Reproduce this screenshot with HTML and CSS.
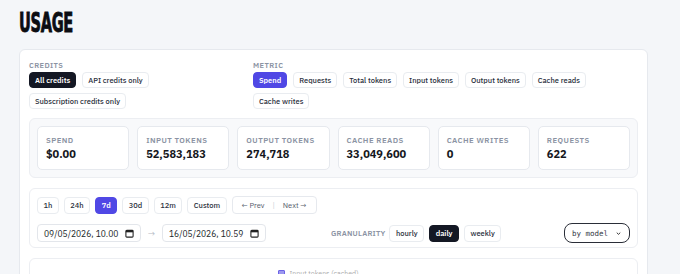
FILE: index.html
```html
<!DOCTYPE html>
<html>
<head>
<meta charset="utf-8">
<link rel="stylesheet" href="styles.css">
</head>
<body>
<div class="page">
  <h1 class="title"><span>USAGE</span></h1>
  <div class="card main">
    <div class="filters">
      <div class="group credits">
        <div class="label">CREDITS</div>
        <div class="chips">
          <span class="chip dark">All credits</span>
          <span class="chip">API credits only</span>
          <span class="chip">Subscription credits only</span>
        </div>
      </div>
      <div class="group metric">
        <div class="label">METRIC</div>
        <div class="chips">
          <span class="chip purple">Spend</span>
          <span class="chip">Requests</span>
          <span class="chip">Total tokens</span>
          <span class="chip">Input tokens</span>
          <span class="chip">Output tokens</span>
          <span class="chip">Cache reads</span>
          <span class="chip">Cache writes</span>
        </div>
      </div>
    </div>
    <div class="stats">
      <div class="stat"><div class="slabel">SPEND</div><div class="sval">$0.00</div></div>
      <div class="stat"><div class="slabel">INPUT TOKENS</div><div class="sval">52,583,183</div></div>
      <div class="stat"><div class="slabel">OUTPUT TOKENS</div><div class="sval">274,718</div></div>
      <div class="stat"><div class="slabel">CACHE READS</div><div class="sval">33,049,600</div></div>
      <div class="stat"><div class="slabel">CACHE WRITES</div><div class="sval">0</div></div>
      <div class="stat"><div class="slabel">REQUESTS</div><div class="sval">622</div></div>
    </div>
    <div class="time">
      <div class="row">
        <span class="chip">1h</span>
        <span class="chip">24h</span>
        <span class="chip purple">7d</span>
        <span class="chip">30d</span>
        <span class="chip">12m</span>
        <span class="chip">Custom</span>
        <span class="nav"><span class="navbtn">&larr; Prev</span><span class="sep">|</span><span class="navbtn">Next &rarr;</span></span>
      </div>
      <div class="row row2">
        <span class="date">09/05/2026, 10.00 <svg class="cal" viewBox="0 0 10 10" width="9" height="9"><rect x="1" y="1.5" width="8" height="7.5" rx="1" fill="none" stroke="#222" stroke-width="1.2"/><rect x="1" y="1.5" width="8" height="2.2" fill="#222"/></svg></span>
        <span class="arrow">&rarr;</span>
        <span class="date">16/05/2026, 10.59 <svg class="cal" viewBox="0 0 10 10" width="9" height="9"><rect x="1" y="1.5" width="8" height="7.5" rx="1" fill="none" stroke="#222" stroke-width="1.2"/><rect x="1" y="1.5" width="8" height="2.2" fill="#222"/></svg></span>
        <span class="gran">GRANULARITY</span>
        <span class="chip">hourly</span>
        <span class="chip dark">daily</span>
        <span class="chip">weekly</span>
        <span class="select">by model <svg viewBox="0 0 10 10" width="7" height="7"><path d="M2.5 3.8 L5 6.2 L7.5 3.8" fill="none" stroke="#333" stroke-width="1.4"/></svg></span>
      </div>
    </div>
    <div class="chart">
      <div class="legend"><span class="box"></span><span class="ltext">Input tokens (cached)</span></div>
    </div>
  </div>
</div>
</body>
</html>
```
FILE: styles.css
```css
* { box-sizing: border-box; }
html, body { margin: 0; padding: 0; }
body {
  background: #f4f6f9;
  font-family: "IBM Plex Sans", Inter, "Noto Sans", sans-serif;
  color: #1b1f2a;
  width: 680px;
  height: 274px;
  overflow: hidden;
}
.page { padding: 9px 32px 0 19px; }
.title {
  margin: 0;
  height: 40px;
  font-family: "DejaVu Sans Condensed", "DejaVu Sans", sans-serif;
  font-weight: 700;
  font-size: 27px;
  line-height: 28px;
  color: #0b0d12;
}
.title span {
  display: inline-block;
  transform: scaleX(0.6);
  transform-origin: left center;
  letter-spacing: -0.5px;
  -webkit-text-stroke: 0.9px #0b0d12;
}
.card {
  background: #fff;
  border: 1px solid #e6e9ee;
  border-radius: 6px;
}
.main { padding: 9px 9px 0 9px; height: 240px; }
.filters { display: flex; }
.group .label, .gran {
  font-size: 7.5px;
  font-weight: 600;
  letter-spacing: 0.4px;
  color: #8b93a3;
}
.group .label { margin: 1px 0 2px; line-height: 10px; }
.credits { width: 224px; }
.metric { flex: 1; }
.chips { display: flex; flex-wrap: wrap; gap: 5px 6px; }
.credits .chips { width: 130px; }
.chip {
  display: inline-flex;
  align-items: center;
  height: 16px;
  padding: 0 5px;
  font-size: 7.5px;
  font-weight: 500;
  color: #2c3140;
  border: 1px solid #e9ecf0;
  border-radius: 4px;
  background: #fff;
  white-space: nowrap;
}
.chip.dark { background: #141824; border-color: #141824; color: #fff; font-weight: 600; }
.chip.purple { background: #5048e5; border-color: #5048e5; color: #fff; font-weight: 600; }
.stats {
  margin-top: 9px;
  display: flex;
  gap: 8px;
  padding: 7px 7px 7px 7px;
  background: #f8f9fb;
  border: 1px solid #eceef2;
  border-radius: 6px;
}
.stat {
  flex: 1;
  height: 44px;
  background: #fff;
  border: 1px solid #e6e9ee;
  border-radius: 5px;
  padding: 8px 8px 0 8px;
}
.slabel {
  font-size: 7.8px;
  font-weight: 600;
  letter-spacing: 0.45px;
  color: #8b93a3;
  line-height: 10px;
}
.sval {
  margin-top: 2px;
  font-size: 11px;
  font-weight: 700;
  color: #15171d;
  line-height: 15px;
}
.time {
  margin-top: 10px;
  padding: 7px 7px 6px 7px;
  background: #fff;
  border: 1px solid #eceef2;
  border-radius: 6px;
  height: 60px;
}
.row { display: flex; align-items: center; gap: 5px; }
.row .chip { padding: 0 5.5px; height: 17px; }
.row2 { margin-top: 9px; gap: 0; }
.nav {
  display: inline-flex;
  align-items: center;
  height: 18px;
  padding: 0 9px;
  border: 1px solid #e6e9ee;
  border-radius: 4px;
  font-size: 7.5px;
  color: #555c6b;
  gap: 8px;
}
.sep { color: #c8ccd4; }
.date {
  display: inline-flex;
  align-items: center;
  justify-content: space-between;
  width: 104px;
  height: 18px;
  padding: 0 6px;
  border: 1px solid #e3e6eb;
  border-radius: 4px;
  font-size: 8.5px;
  color: #1b1f2a;
}
.cal { display: block; }
.arrow { width: 21px; text-align: center; color: #b5bac4; font-size: 9px; }
.gran { margin-left: 65px; margin-right: 4px; letter-spacing: 0.2px; }
.row2 .chip { margin-right: 5px; padding: 0 5.5px; height: 17px; }
.select {
  margin-left: auto;
  display: inline-flex;
  align-items: center;
  gap: 7px;
  height: 20px;
  padding: 0 7px 0 7px;
  border: 1px solid #2a2e38;
  border-radius: 8px;
  font-family: "DejaVu Sans Mono", "Liberation Mono", monospace;
  font-size: 7.5px;
  color: #333845;
}
.chart {
  margin-top: 10px;
  height: 40px;
  border: 1px solid #eceef2;
  border-radius: 6px;
  display: flex;
  justify-content: center;
  padding-top: 11px;
}
.legend { display: flex; align-items: flex-start; gap: 4px; margin-left: -30px; height: 6px; overflow: hidden; }
.box { width: 7px; height: 7px; background: #9c98ef; border: 1px solid #6c63e6; border-radius: 1px; }
.ltext { font-size: 7px; color: #aaa; line-height: 8px; }
```
